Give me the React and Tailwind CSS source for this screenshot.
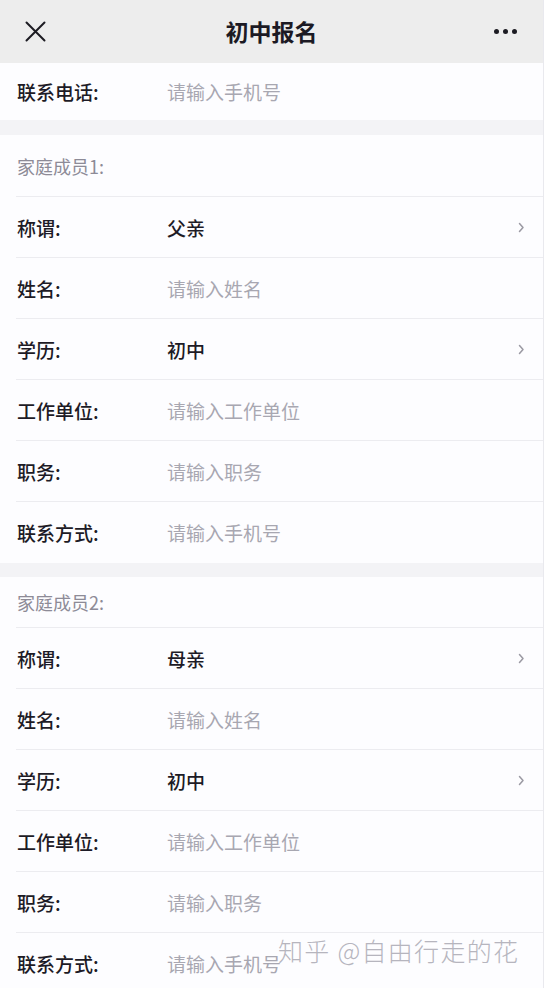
import React from "react";

function Chevron() {
  return (
    <svg width="7" height="11" viewBox="0 0 7 11" className="mr-[18px]">
      <path d="M1.5 1.5 L5 5.5 L1.5 9.5" fill="none" stroke="#9b9aa3" strokeWidth="1.5" strokeLinecap="round" strokeLinejoin="round" />
    </svg>
  );
}

function Row({ label, value, placeholder, chevron, last }) {
  return (
    <div className={"ml-[16px] h-[61px] flex items-center " + (last ? "" : "border-b border-[#ececf0]")}>
      <div className="w-[151px] pl-[1px] text-[19px] font-medium text-[#1d1b26] leading-none">{label}</div>
      <div className="flex-1 flex items-center justify-between">
        {value ? (
          <span className="text-[19px] font-medium text-[#1d1b26] leading-none">{value}</span>
        ) : (
          <span className="text-[19px] text-[#a8a7b1] leading-none">{placeholder}</span>
        )}
        {chevron ? <Chevron /> : null}
      </div>
    </div>
  );
}

function Section({ title, headerH, member }) {
  return (
    <div className="bg-[#fdfdff]">
      <div className={"ml-[16px] flex items-center border-b border-[#ececf0] " + headerH}>
        <span className="pl-[1px] text-[18px] text-[#8d8b97] leading-none">{title}</span>
      </div>
      <Row label="称谓:" value={member} chevron />
      <Row label="姓名:" placeholder="请输入姓名" />
      <Row label="学历:" value="初中" chevron />
      <Row label="工作单位:" placeholder="请输入工作单位" />
      <Row label="职务:" placeholder="请输入职务" />
      <Row label="联系方式:" placeholder="请输入手机号" last />
    </div>
  );
}

export default function App() {
  return (
    <div className="relative w-[544px] h-[988px] overflow-hidden bg-[#f3f3f6] border-r border-[#e9e9ee] font-['Noto_Sans_CJK_SC','Noto_Sans',sans-serif]">
      <div className="h-[63px] bg-[#ededed] flex items-center">
        <div className="w-[70px] pl-[25px] flex items-center">
          <svg width="21" height="21" viewBox="0 0 21 21">
            <path d="M1.5 1.5 L19.5 19.5 M19.5 1.5 L1.5 19.5" stroke="#1c1b22" strokeWidth="2" strokeLinecap="round" />
          </svg>
        </div>
        <div className="flex-1 text-center text-[23px] font-bold text-[#1c1a24] leading-none">初中报名</div>
        <div className="w-[70px] flex items-center justify-end gap-[4px] pr-[26px]">
          <span className="w-[5px] h-[5px] rounded-full bg-[#1c1b22]" />
          <span className="w-[5px] h-[5px] rounded-full bg-[#1c1b22]" />
          <span className="w-[5px] h-[5px] rounded-full bg-[#1c1b22]" />
        </div>
      </div>

      <div className="bg-[#fdfdff] h-[57px] pl-[16px] flex items-center">
        <div className="w-[151px] pl-[1px] text-[19px] font-medium text-[#1d1b26] leading-none">联系电话:</div>
        <span className="text-[19px] text-[#a8a7b1] leading-none">请输入手机号</span>
      </div>

      <div className="h-[15px]" />
      <Section title="家庭成员1:" headerH="h-[62px]" member="父亲" />
      <div className="h-[14px]" />
      <Section title="家庭成员2:" headerH="h-[51px]" member="母亲" />

      <div className="absolute left-[278px] top-[938px] text-[25px] tracking-[1.3px] font-light text-[#b6b5be] leading-none whitespace-nowrap">
        知乎 @自由行走的花
      </div>
    </div>
  );
}
